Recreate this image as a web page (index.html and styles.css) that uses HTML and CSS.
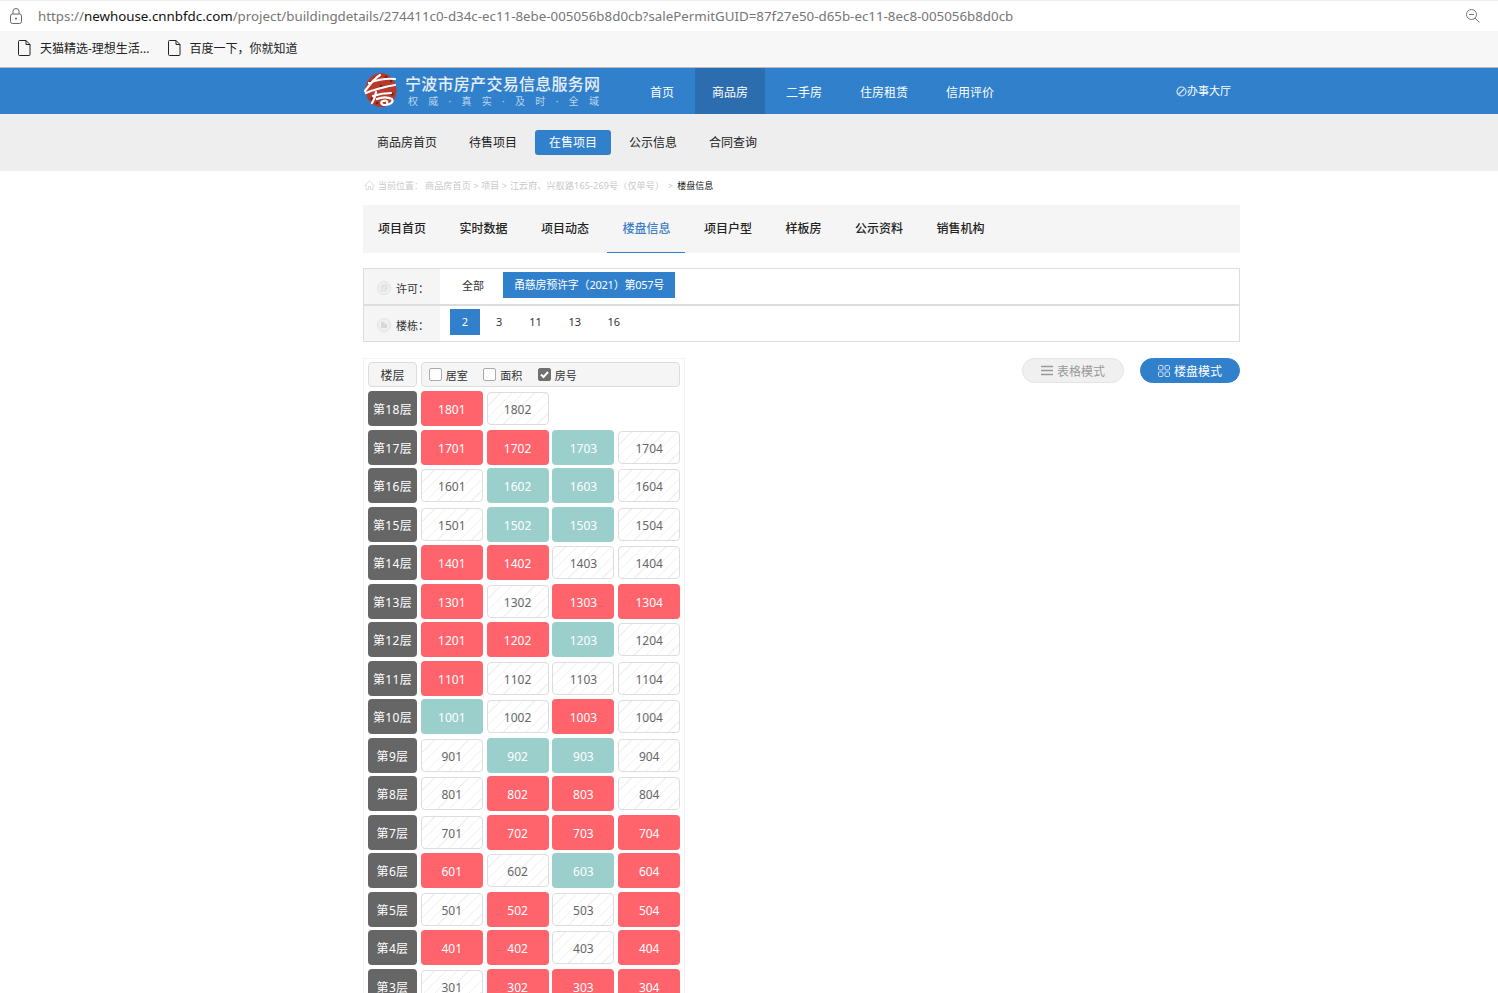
FILE: index.html
```html
<!DOCTYPE html>
<html lang="zh-CN">
<head>
<meta charset="utf-8">
<title>楼盘信息</title>
<link rel="stylesheet" href="styles.css">
</head>
<body>
<div class="addr">
  <svg class="lock" width="16" height="18" viewBox="0 0 16 18"><path d="M5 7V4.500a3 3 0 0 1 6 0V7" fill="none" stroke="#666" stroke-width="1"/><rect x="2.500" y="7" width="11" height="9.500" rx="2" fill="none" stroke="#666"/><circle cx="8" cy="11.500" r="1" fill="#666"/></svg>
  <div class="url">https://<b>newhouse.cnnbfdc.com</b>/project/buildingdetails/274411c0-d34c-ec11-8ebe-005056b8d0cb?salePermitGUID=87f27e50-d65b-ec11-8ec8-005056b8d0cb</div>
  <svg class="zoomicon" width="16" height="16" viewBox="0 0 16 16"><circle cx="6.500" cy="6.500" r="5" fill="none" stroke="#777"/><path d="M4 6.500h5M10 10l4.500 4.500" stroke="#777" fill="none"/></svg>
</div>
<div class="bookmarks">
  <div class="bm"><svg width="14" height="16" viewBox="0 0 14 16"><path d="M1.500 1.500a1 1 0 0 1 1-1H9l4 4v10a1 1 0 0 1-1 1H2.500a1 1 0 0 1-1-1zM9 .5v4h4" fill="none" stroke="#222"/></svg><span>天猫精选-理想生活...</span></div>
  <div class="bm"><svg width="14" height="16" viewBox="0 0 14 16"><path d="M1.500 1.500a1 1 0 0 1 1-1H9l4 4v10a1 1 0 0 1-1 1H2.500a1 1 0 0 1-1-1zM9 .5v4h4" fill="none" stroke="#222"/></svg><span>百度一下，你就知道</span></div>
</div>

<header class="topbar">
  <div class="wrap topinner">
    <div class="brand">
      <svg class="logo" width="34" height="36" viewBox="0 0 34 36">
        <path d="M17 1c8 0 15 7 15.500 16 .5 10-6 18-15 18S2 28 1.500 18C1 9 8 1 17 1z" fill="#b53a2c"/>
        <g fill="#6f2018">
          <circle cx="22" cy="5" r="1.500"/><circle cx="27" cy="9" r="1.200"/><circle cx="11" cy="6" r="1.200"/><circle cx="17" cy="14" r="1.300"/><circle cx="25" cy="15" r="1.200"/><circle cx="8" cy="27" r="1.500"/><circle cx="28" cy="22" r="1.500"/><circle cx="13" cy="31" r="1.200"/><circle cx="6" cy="10" r="1"/><circle cx="22" cy="21" r="1"/>
        </g>
        <path d="M1 19C6 12 11 6 16 3M5 11c8-3 16-5 26-4M2 21c9-4 18-6 29-8M9 24c6-2 12-3 18-3M12 20c-1 5-2 8-4 11M13 27c5-2 11-2 15 0 2 3-2 6-7 6-4 0-5-3-2-4 3-1 5 0 4 2" fill="none" stroke="#fff" stroke-width="2.200" stroke-linecap="round"/>
      </svg>
      <div class="brandtext">
        <div class="brandtitle">宁波市房产交易信息服务网</div>
        <div class="brandsub"><span>权</span><span>威</span><span>·</span><span>真</span><span>实</span><span>·</span><span>及</span><span>时</span><span>·</span><span>全</span><span>域</span></div>
      </div>
    </div>
    <nav class="mainnav">
      <a>首页</a><a class="on">商品房</a><a>二手房</a><a>住房租赁</a><a>信用评价</a>
    </nav>
    <div class="hall">
      <svg width="11" height="11" viewBox="0 0 11 11"><circle cx="5.500" cy="5.500" r="4.500" fill="none" stroke="#d5e4f5" stroke-width="1.200"/><path d="M2.500 8.500l6-6" stroke="#d5e4f5" stroke-width="1.200"/></svg>
      <span>办事大厅</span>
    </div>
  </div>
</header>

<div class="subbar">
  <nav class="wrap subnav">
    <a>商品房首页</a><a>待售项目</a><a class="on">在售项目</a><a>公示信息</a><a>合同查询</a>
  </nav>
</div>

<main class="wrap">
  <div class="crumb">
    <svg width="11" height="10" viewBox="0 0 11 10"><path d="M.5 5.500L5.500 1l5 4.500M2 4.500V9.500h2.500V6.500h2v3H9V4.500" fill="none" stroke="#ddd"/></svg>
    <span class="c1">当前位置：</span>
    <span class="c2">商品房首页 &gt; 项目 &gt; 江云府、兴舣路165-269号（仅单号）</span>
    <span class="c3">&gt;</span>
    <span class="c4">楼盘信息</span>
  </div>

  <nav class="projnav">
    <a>项目首页</a><a>实时数据</a><a>项目动态</a><a class="on">楼盘信息</a><a>项目户型</a><a>样板房</a><a>公示资料</a><a>销售机构</a>
  </nav>

  <section class="filters">
    <div class="frow">
      <div class="flabel">
        <svg class="ficon" width="14" height="14" viewBox="0 0 14 14"><circle cx="7" cy="7" r="6.500" fill="#f0f0f0" stroke="#e0e0e0"/><rect x="4" y="5" width="5" height="5" fill="none" stroke="#ddd"/><rect x="6" y="4" width="4" height="4" fill="none" stroke="#ddd"/></svg>
        <span>许可：</span>
      </div>
      <div class="fitems first"><a class="wide">全部</a><a class="sel permit">甬慈房预许字（2021）第057号</a></div>
    </div>
    <div class="frow">
      <div class="flabel">
        <svg class="ficon" width="14" height="14" viewBox="0 0 14 14"><circle cx="7" cy="7" r="6.500" fill="#f0f0f0" stroke="#e0e0e0"/><path d="M4 10V4h3.500v2H10v4z" fill="#d8d8d8"/></svg>
        <span>楼栋：</span>
      </div>
      <div class="fitems"><a class="sel bld">2</a><a class="num n3">3</a><a class="num">11</a><a class="num">13</a><a class="num">16</a></div>
    </div>
  </section>

  <div class="content">
    <div class="board">
      <div class="row head">
        <div class="hfloor">楼层</div>
        <div class="hchecks">
          <label class="chk"><i class="box"></i>居室</label>
          <label class="chk"><i class="box"></i>面积</label>
          <label class="chk"><i class="box ck"><svg width="13" height="13" viewBox="0 0 13 13"><path d="M3 6.500l2.500 2.500L10 4" fill="none" stroke="#fff" stroke-width="2"/></svg></i>房号</label>
        </div>
      </div>
      <div class="row"><div class="fl">第18层</div><div class="c r">1801</div><div class="c n">1802</div></div>
      <div class="row"><div class="fl">第17层</div><div class="c r">1701</div><div class="c r">1702</div><div class="c t">1703</div><div class="c n">1704</div></div>
      <div class="row"><div class="fl">第16层</div><div class="c n">1601</div><div class="c t">1602</div><div class="c t">1603</div><div class="c n">1604</div></div>
      <div class="row"><div class="fl">第15层</div><div class="c n">1501</div><div class="c t">1502</div><div class="c t">1503</div><div class="c n">1504</div></div>
      <div class="row"><div class="fl">第14层</div><div class="c r">1401</div><div class="c r">1402</div><div class="c n">1403</div><div class="c n">1404</div></div>
      <div class="row"><div class="fl">第13层</div><div class="c r">1301</div><div class="c n">1302</div><div class="c r">1303</div><div class="c r">1304</div></div>
      <div class="row"><div class="fl">第12层</div><div class="c r">1201</div><div class="c r">1202</div><div class="c t">1203</div><div class="c n">1204</div></div>
      <div class="row"><div class="fl">第11层</div><div class="c r">1101</div><div class="c n">1102</div><div class="c n">1103</div><div class="c n">1104</div></div>
      <div class="row"><div class="fl">第10层</div><div class="c t">1001</div><div class="c n">1002</div><div class="c r">1003</div><div class="c n">1004</div></div>
      <div class="row"><div class="fl">第9层</div><div class="c n">901</div><div class="c t">902</div><div class="c t">903</div><div class="c n">904</div></div>
      <div class="row"><div class="fl">第8层</div><div class="c n">801</div><div class="c r">802</div><div class="c r">803</div><div class="c n">804</div></div>
      <div class="row"><div class="fl">第7层</div><div class="c n">701</div><div class="c r">702</div><div class="c r">703</div><div class="c r">704</div></div>
      <div class="row"><div class="fl">第6层</div><div class="c r">601</div><div class="c n">602</div><div class="c t">603</div><div class="c r">604</div></div>
      <div class="row"><div class="fl">第5层</div><div class="c n">501</div><div class="c r">502</div><div class="c n">503</div><div class="c r">504</div></div>
      <div class="row"><div class="fl">第4层</div><div class="c r">401</div><div class="c r">402</div><div class="c n">403</div><div class="c r">404</div></div>
      <div class="row"><div class="fl">第3层</div><div class="c n">301</div><div class="c r">302</div><div class="c r">303</div><div class="c r">304</div></div>
    </div>
    <div class="modes">
      <a class="mode">
        <svg width="12" height="11" viewBox="0 0 12 11"><path d="M0 1.500h12M0 5.500h12M0 9.500h12" stroke="#999" stroke-width="1.300"/></svg>
        <span>表格模式</span>
      </a>
      <a class="mode act">
        <svg width="12" height="12" viewBox="0 0 12 12"><g fill="none" stroke="#cfe0f4"><rect x=".5" y=".5" width="4.500" height="4.500" rx="1"/><rect x="7" y=".5" width="4.500" height="4.500" rx="1"/><rect x=".5" y="7" width="4.500" height="4.500" rx="1"/><rect x="7" y="7" width="4.500" height="4.500" rx="1"/></g></svg>
        <span>楼盘模式</span>
      </a>
    </div>
  </div>
</main>
</body>
</html>
```
FILE: styles.css
```css
* { box-sizing: border-box; }
html, body { margin: 0; height: 100%; overflow: hidden; background: #fff; }
body { font-family: "Noto Sans", "Noto Sans CJK SC", sans-serif; font-size: 12px; color: #333; }
a { color: inherit; text-decoration: none; }
.wrap { width: 877px; margin-left: 363px; }

.addr { height: 31px; display: flex; align-items: center; padding: 0 17px 0 8px; border-top: 1px solid #eee; background: #fff; }
.lock { flex: none; margin-right: 14px; }
.url { flex: 1; font-size: 13.340px; color: #767676; white-space: nowrap; }
.url b { font-weight: 400; color: #111; }
.zoomicon { flex: none; }
.bookmarks { height: 37px; display: flex; align-items: center; gap: 17px; padding: 0 0 2px 17px; background: #f7f7f7; border-bottom: 1px solid #bbb; }
.bm { display: flex; align-items: center; gap: 9px; color: #222; font-size: 12px; }

.topbar { height: 46px; background: #3180cc; color: #fff; }
.topinner { display: flex; height: 46px; align-items: stretch; position: relative; }
.brand { display: flex; align-items: center; width: 270px; }
.logo { flex: none; margin: 0 7px 2px 1px; }
.brandtext { width: 195px; margin-bottom: 1px; }
.brandtitle { font-size: 16px; font-weight: 500; letter-spacing: .28px; line-height: 20px; white-space: nowrap; color: #e6eef7; }
.brandsub { display: flex; justify-content: space-between; padding: 0 1px 0 3px; font-size: 10px; line-height: 13px; color: #bcd4ec; margin-top: 1px; }
.mainnav { display: flex; gap: 4px; }
.mainnav a { display: flex; align-items: center; padding: 2px 17px 0; font-size: 12px; }
.mainnav a.on { background: #2c6db0; }
.hall { position: absolute; right: 9px; top: 15px; display: flex; align-items: center; gap: 0; font-size: 11px; line-height: 16px; }

.subbar { height: 57px; background: #eee; }
.subnav { display: flex; gap: 4px; align-items: center; height: 57px; }
.subnav a { padding: 0 14px; height: 25px; line-height: 25px; border-radius: 3px; color: #222; }
.subnav a.on { background: #3180cc; color: #fff; }

.crumb { height: 34px; display: flex; align-items: center; gap: 3px; font-size: 9px; white-space: nowrap; padding: 0 0 6px 1px; }
.c1 { color: #ccc; margin-right: -1px; }
.c2 { color: #c8c8c8; letter-spacing: .17px; }
.c3 { color: #c8c8c8; margin: 0 1px; }
.c4 { color: #111; }

.projnav { height: 48px; display: flex; gap: 3.500px; background: #f5f5f5; }
.projnav a { padding: 0 15px; line-height: 47px; font-weight: 500; color: #222; height: 48px; }
.projnav a.on { color: #3f7ec8; border-bottom: 1px solid #3180cc; padding: 0 14px 0 16px; margin-left: -1px; margin-right: 1px; }

.filters { margin-top: 15px; border: 1px solid #ddd; height: 74px; }
.frow { height: 35px; display: flex; }
.frow:first-child { border-bottom: 2px solid #ddd; height: 37px; }
.flabel { width: 76px; background: #f5f5f5; display: flex; align-items: center; padding: 2px 0 0 13px; gap: 5px; font-size: 11px; color: #333; }
.ficon { flex: none; }
.fitems { display: flex; align-items: center; padding: 0 0 3px 10px; font-size: 11px; }
.fitems.first { padding: 0 0 4px 22px; }
.fitems .wide { margin-right: 19px; }
.sel { background: #3180cc; color: #fff; height: 26px; line-height: 26px; text-align: center; }
.permit { padding: 0 11px; white-space: nowrap; font-size: 11px; letter-spacing: -.23px; }
.bld { width: 30px; }
.num { margin: 0 0 2px 26.500px; color: #333; }
.num.n3 { margin: 0 .5px 2px 16px; }

.content { display: flex; justify-content: space-between; margin-top: 16px; align-items: flex-start; }
.board { width: 322px; border: 1px solid #f4f4f4; border-bottom: 0; padding: 3px 0 0 4px; display: flex; flex-direction: column; gap: 3.500px; }
.row { display: grid; grid-template-columns: 49px repeat(4, 62px); column-gap: 3.800px; height: 35px; }
.row.head { height: 25px; margin-bottom: .5px; }
.hfloor, .hchecks { background: #f5f5f5; border: 1px solid #ddd; border-radius: 4px; }
.hfloor { text-align: center; line-height: 25px; height: 25px; color: #333; }
.hchecks { grid-column: 2 / 6; height: 25px; display: flex; align-items: center; padding-left: 7px; font-size: 11px; gap: 15.500px; color: #333; }
.chk { display: flex; align-items: center; gap: 4px; }
.box { width: 13px; height: 13px; background: #fff; border: 1px solid #aaa; border-radius: 2px; display: block; }
.box.ck { background: #707070; border-color: #707070; position: relative; }
.box.ck svg { position: absolute; left: -1px; top: -1px; }
.fl { background: #666; color: #fff; border-radius: 4px; text-align: center; line-height: 37px; height: 35px; white-space: nowrap; letter-spacing: .3px; }
.c { border-radius: 4px; text-align: center; line-height: 37px; height: 35px; color: #fff; }
.r { background: #ff636b; }
.t { background: #9bcfcc; }
.n { color: #666; background-color: #fff; border: 1px solid #ddd; height: 33px; margin: 1px 0 0; line-height: 33px; background-image: repeating-linear-gradient(-45deg, transparent 0 7px, #f1f1f1 7px 8px); }

.modes { display: flex; gap: 16px; }
.mode { width: 102px; height: 25px; border-radius: 13px; border: 1px solid #e4e4e4; background: #f0f0f0; color: #999; display: flex; align-items: center; justify-content: center; gap: 4px; }
.mode.act { width: 100px; background: #3180cc; color: #fff; border-color: #3180cc; }
```
